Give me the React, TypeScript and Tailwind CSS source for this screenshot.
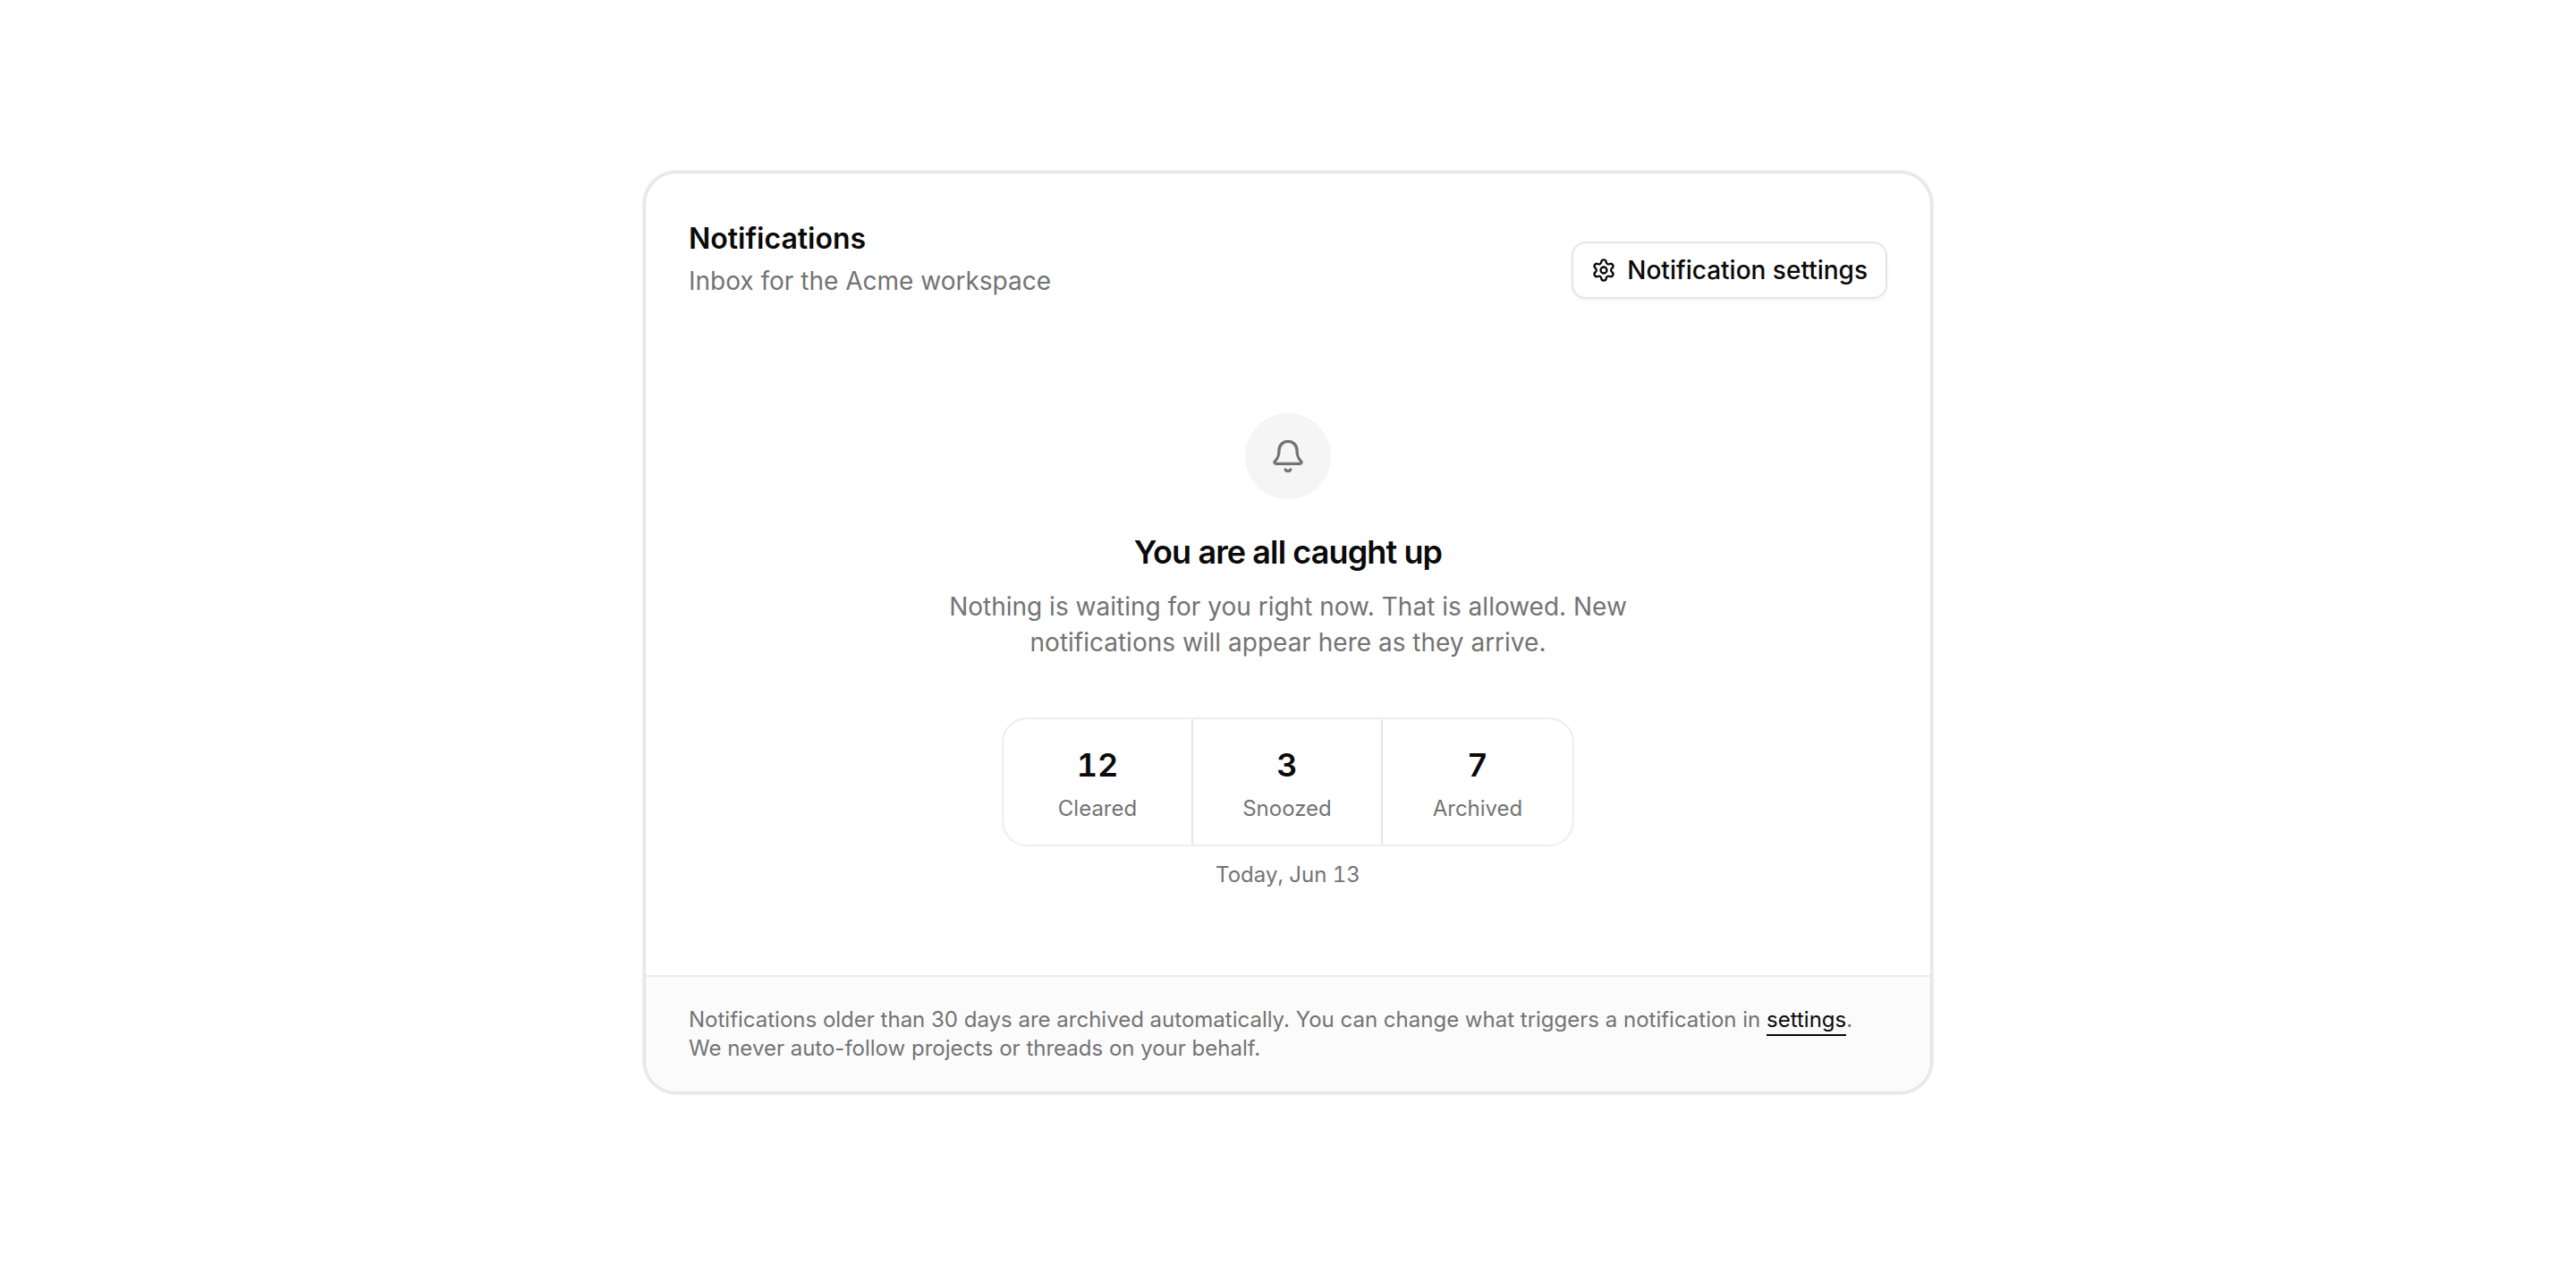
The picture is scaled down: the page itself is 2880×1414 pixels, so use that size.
import { Bell, Settings } from "lucide-react";

const stats = [
  { label: "Cleared", value: 12 },
  { label: "Snoozed", value: 3 },
  { label: "Archived", value: 7 },
];

export default function App() {
  return (
    <main className="flex min-h-screen items-center justify-center bg-white font-['Inter',sans-serif] text-neutral-950">
      <section className="w-full max-w-[1440px] overflow-hidden rounded-[36px] border-2 border-[#e5e5e5] bg-white ring-2 ring-[#ededed]">
        <header className="flex items-end justify-between px-12 pt-12">
          <div className="flex flex-col gap-0.5">
            <h1 className="text-[32px] leading-[50px] font-semibold">Notifications</h1>
            <p className="text-[28px] leading-[40px] text-neutral-500">Inbox for the Acme workspace</p>
          </div>
          <button
            type="button"
            className="flex h-16 items-center gap-3 rounded-2xl border-2 border-[#e5e5e5] bg-white px-5 text-[28px] leading-[40px] font-medium shadow-[0_2px_4px_rgba(0,0,0,0.05)]"
          >
            <Settings className="size-7" />
            Notification settings
          </button>
        </header>

        <div className="flex flex-col items-center px-12 pt-32 pb-24">
          <div className="flex size-24 items-center justify-center rounded-full bg-neutral-100 text-neutral-500">
            <Bell className="size-10" />
          </div>
          <h2 className="mt-8 text-[36px] leading-[54px] font-semibold tracking-tight">You are all caught up</h2>
          <p className="mt-3.5 max-w-3xl text-center text-[28px] leading-[40px] text-neutral-500">
            Nothing is waiting for you right now. That is allowed. New notifications will appear here as they arrive.
          </p>

          <dl className="mt-16 grid w-full max-w-[640px] grid-cols-3 divide-x-2 divide-[#e5e5e5] rounded-[28px] border-2 border-[#eeeeee]">
            {stats.map((stat) => (
              <div key={stat.label} className="flex flex-col-reverse items-center gap-1.5 py-6">
                <dt className="text-2xl text-neutral-500">{stat.label}</dt>
                <dd className="text-[36px] leading-[54px] font-semibold tabular-nums">{stat.value}</dd>
              </div>
            ))}
          </dl>
          <p className="mt-4 text-2xl text-neutral-500 tabular-nums">Today, Jun 13</p>
        </div>

        <footer className="border-t-2 border-[#ebebeb] bg-[#fbfbfb] px-12 py-8 text-2xl text-neutral-500">
          <p>
            <span>Notifications older than 30 days are archived automatically. </span>
            <span>You can change what triggers a notification in </span>
            <a href="#settings" className="border-b-2 border-neutral-950 pb-0.5 text-neutral-950">
              settings
            </a>
            <span>. </span>
            <span>We never auto-follow projects or threads on your behalf.</span>
          </p>
        </footer>
      </section>
    </main>
  );
}
